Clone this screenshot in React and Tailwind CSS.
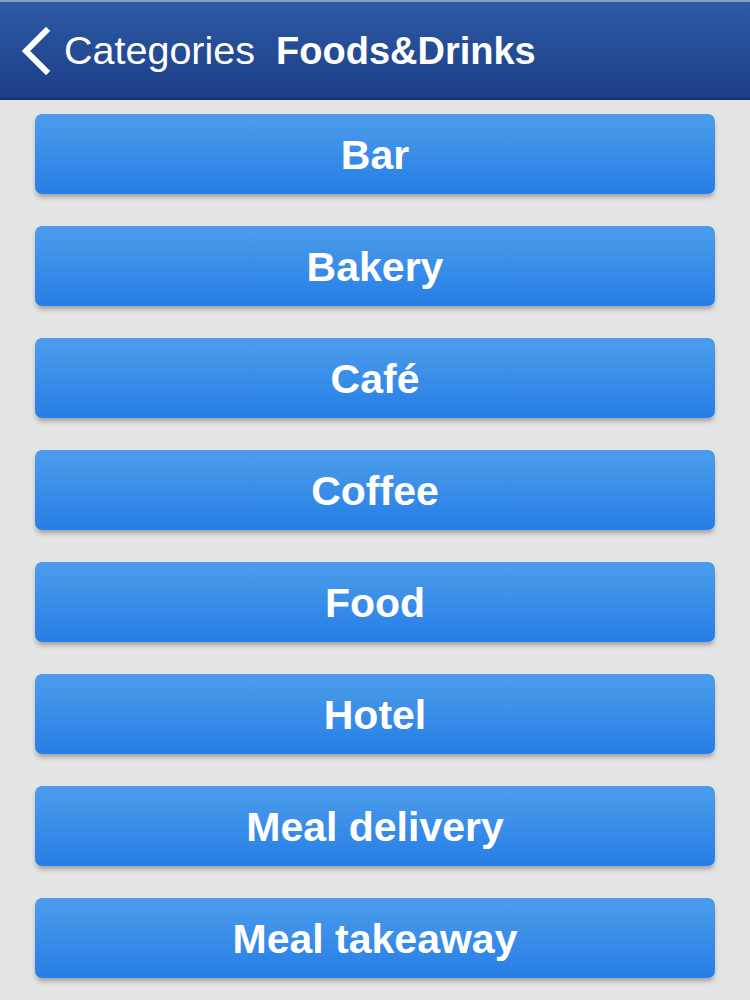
import React from 'react';

const categories = ['Bar', 'Bakery', 'Café', 'Coffee', 'Food', 'Hotel', 'Meal delivery', 'Meal takeaway'];

const App = () => {
  return (
    <div className="w-[750px] h-[1000px] overflow-hidden bg-[#e4e4e4] font-['Liberation_Sans',Arial,sans-serif]">
      <header className="h-[100px] flex items-center bg-gradient-to-b from-[#2d5aa6] to-[#1d3e86] border-t-2 border-t-[#8a9cc4] border-b-2 border-b-[#1a3270] pl-[18px]">
        <svg width="34" height="48" viewBox="0 0 34 48" className="mr-[12px] mt-[2px]">
          <path d="M28 4 L8 24 L28 44" fill="none" stroke="white" strokeWidth="6" strokeLinecap="square" />
        </svg>
        <span className="text-white text-[39.5px] pt-[2px]">Categories</span>
        <span className="text-white text-[38px] font-bold ml-[21px] pt-[2px]">Foods&amp;Drinks</span>
      </header>
      <div className="flex flex-col gap-[32px] pt-[14px] px-[35px]">
        {categories.map((c) => (
          <button
            key={c}
            className="h-[80px] w-full rounded-[7px] bg-gradient-to-b from-[#4c9deb] to-[#267ee6] text-white text-[41px] font-bold pt-[3px] shadow-[0_4px_5px_-1px_rgba(0,0,0,0.3)]"
          >
            {c}
          </button>
        ))}
      </div>
    </div>
  );
};

export default App;
